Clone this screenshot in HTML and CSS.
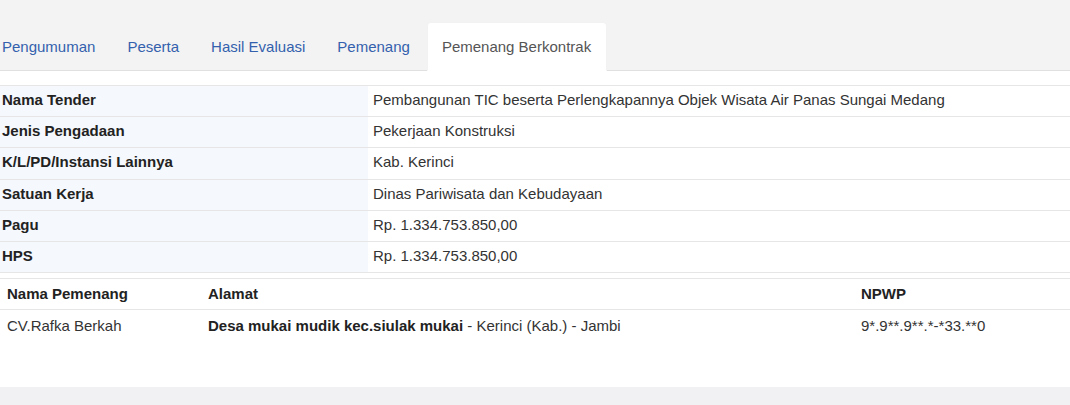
FILE: index.html
```html
<!DOCTYPE html>
<html lang="id">
<head>
<meta charset="utf-8">
<title>Pemenang Berkontrak</title>
<link rel="stylesheet" href="styles.css">
</head>
<body>
<div class="page">
  <ul class="tabs">
    <li><a class="tab" href="#">Pengumuman</a></li>
    <li><a class="tab" href="#">Peserta</a></li>
    <li><a class="tab" href="#">Hasil Evaluasi</a></li>
    <li><a class="tab" href="#">Pemenang</a></li>
    <li><a class="tab active" href="#">Pemenang Berkontrak</a></li>
  </ul>
  <div class="panel">
    <table class="info">
      <tr><th>Nama Tender</th><td>Pembangunan TIC beserta Perlengkapannya Objek Wisata Air Panas Sungai Medang</td></tr>
      <tr><th>Jenis Pengadaan</th><td>Pekerjaan Konstruksi</td></tr>
      <tr><th>K/L/PD/Instansi Lainnya</th><td>Kab. Kerinci</td></tr>
      <tr><th>Satuan Kerja</th><td>Dinas Pariwisata dan Kebudayaan</td></tr>
      <tr><th>Pagu</th><td>Rp. 1.334.753.850,00</td></tr>
      <tr><th>HPS</th><td>Rp. 1.334.753.850,00</td></tr>
    </table>
    <table class="winners">
      <thead>
        <tr><th class="c-name">Nama Pemenang</th><th class="c-addr">Alamat</th><th>NPWP</th></tr>
      </thead>
      <tbody>
        <tr><td>CV.Rafka Berkah</td><td><strong>Desa mukai mudik kec.siulak mukai</strong> - Kerinci (Kab.) - Jambi</td><td>9*.9**.9**.*-*33.**0</td></tr>
      </tbody>
    </table>
  </div>
</div>
</body>
</html>
```

FILE: styles.css
```css
html, body {
  margin: 0;
  padding: 0;
}
body {
  background: #f1f1f3;
  font-family: "Liberation Sans", Arial, sans-serif;
  font-size: 15px;
  color: #333;
}
.page {
  width: 1070px;
  height: 405px;
  overflow: hidden;
  background: #f1f1f3;
}
.tabs {
  list-style: none;
  margin: 0;
  padding: 22px 0 0;
  display: flex;
  background: #f3f3f3;
  border-bottom: 1px solid #e0e0e0;
}
.tabs li {
  margin-right: 2px;
  margin-bottom: -1px;
}
.tabs li:first-child {
  margin-left: -13px;
}
.tab {
  display: block;
  padding: 13px 14px;
  line-height: 21px;
  border: 1px solid transparent;
  border-radius: 4px 4px 0 0;
  color: #3461ad;
  text-decoration: none;
}
.tab.active {
  background: #fff;
  color: #555;
  padding-right: 15px;
  border-color: #f2f2f2 #f2f2f2 #fff;
}
.panel {
  background: #fff;
  height: 302px;
  padding-top: 14px;
}
table {
  width: 100%;
  border-collapse: collapse;
  table-layout: fixed;
}
.info {
  border-top: 1px solid #e6e6e6;
  border-bottom: 1px solid #e6e6e6;
  margin-bottom: 5px;
}
.info th,
.info td {
  text-align: left;
  line-height: 20.2px;
  padding: 4px 4px 6px 5px;
  border-top: 1px solid #e6e6e6;
  vertical-align: top;
}
.info th {
  width: 362px;
  padding-left: 2px;
  background: #f5f8fc;
  font-weight: bold;
  color: #222;
}
.winners {
  border-top: 1px solid #e6e6e6;
}
.winners th,
.winners td {
  text-align: left;
  line-height: 20px;
  padding: 5px 7px;
  vertical-align: top;
}
.winners th {
  font-weight: bold;
  color: #222;
  border-bottom: 1px solid #e6e6e6;
}
.winners td {
  padding-top: 6px;
}
.winners .c-name {
  width: 187px;
}
.winners .c-addr {
  width: 639px;
}
.winners strong {
  color: #222;
}
```
